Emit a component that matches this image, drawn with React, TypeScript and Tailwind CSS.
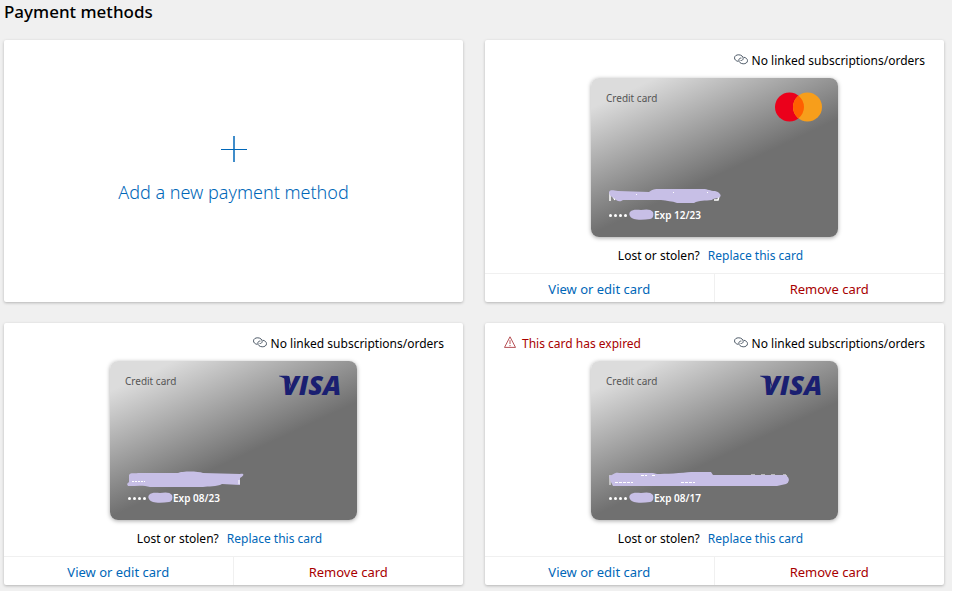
import { ReactNode } from "react";

type CardInfo = {
  id: string;
  brand: "mastercard" | "visa";
  expiry: string;
  expired?: boolean;
  mask: ReactNode;
};

function LinkIcon() {
  return (
    <svg width="14" height="11" viewBox="0 0 14 11" fill="none" stroke="#3c4a58" strokeWidth="0.9" aria-hidden="true" className="-mt-1 shrink-0">
      <path d="M4.300 7.400C2 7 .5 5.600 .5 3.900 .5 2 2.400 .7 4.800 .8 7.400 .9 9.300 2.600 9.200 4.500 9.100 5.900 8 6.700 6.600 6.500" />
      <path d="M9.700 3.200C12 3.600 13.500 5 13.500 6.700 13.500 8.600 11.600 9.900 9.200 9.800 6.600 9.700 4.700 8 4.800 6.100 4.900 4.700 6 3.900 7.400 4.100" />
    </svg>
  );
}

function WarningIcon() {
  return (
    <svg width="12" height="12" viewBox="0 0 12 12" fill="none" stroke="#a4262c" strokeOpacity="0.8" aria-hidden="true" className="-mt-1 shrink-0">
      <path d="M6 .8 11.500 11.400H.5Z" />
      <path d="M6 4.200V8M6 9V10.200" />
    </svg>
  );
}

function MastercardLogo() {
  return (
    <svg width="47" height="30" viewBox="0 0 47 30" role="img" aria-label="Mastercard">
      <circle cx="14.500" cy="15" r="14.500" fill="#eb001b" />
      <circle cx="32.500" cy="15" r="14.500" fill="#f79e1b" />
      <path d="M23.500 3.630a14.500 14.500 0 0 1 0 22.740a14.500 14.500 0 0 1 0-22.740Z" fill="#ff5f00" />
    </svg>
  );
}

function VisaLogo() {
  return (
    <svg width="62" height="30" viewBox="0 0 62 30" role="img" aria-label="Visa" fill="#1a1f71" className="overflow-visible">
      <path d="M0 .7H8C9.500 .7 10.300 1.400 10.600 2.700L12.500 13C10.500 7 6.500 3 0 1.300Z" />
      <text x="3" y="20" fontFamily="Open Sans, sans-serif" fontSize="27" fontWeight="800" fontStyle="italic">
        VISA
      </text>
    </svg>
  );
}

function Digits({ path }: { path: string }) {
  return (
    <svg width="26" height="12" viewBox="0 0 26 12" fill="#c7bfe6" aria-hidden="true">
      <path d={path} />
    </svg>
  );
}

const digitsPath = "M2 3C5 0 9 1 13 1C18 0 23 0 25 3C26 6 25 10 22 10C16 11 9 11 6 10C3 9 0 6 2 3Z";

const cards: CardInfo[] = [
  {
    id: "mc-1223",
    brand: "mastercard",
    expiry: "12/23",
    mask: (
      <>
        <path d="M1 4V13M2 5L6 12M105 12H109L110 8" stroke="#fff" strokeWidth="1.500" fill="none" />
        <path d="M0 4C2 1 5 3 9 3L40 4C44 0 50 1 56 1H94C99 1 101 3 106 3C110 4 113 7 111 9C108 11 104 10 103 12C96 13 90 12 85 15H68C63 13 58 13 52 12H14C10 15 7 12 5 10C2 9 0 7 0 4Z" />
        <path d="M27 6h1v1h-1ZM64 4h1v1h-1ZM98 4h1v1h-1Z" fill="#fff" />
      </>
    ),
  },
  {
    id: "visa-0823",
    brand: "visa",
    expiry: "08/23",
    mask: (
      <>
        <path d="M1 4C3 1 6 3 10 2H50C54 0 70 0 75 2L112 3C117 2 116 5 112 7V14L94 13C89 16 80 15 75 16H22C16 14 8 15 0 15L-1 13L1 11Z" />
        <path d="M4 10.500H17" stroke="#fff" strokeDasharray="2 1" />
        <path d="M111 9v4" stroke="#fff" />
      </>
    ),
  },
  {
    id: "visa-0817",
    brand: "visa",
    expiry: "08/17",
    expired: true,
    mask: (
      <>
        <path d="M1 4V14M142 4H146M152 4H156M162 4H166M174 4H177L178 12" stroke="#fff" fill="none" />
        <path d="M0 5C5 4 5 1 10 2H44L48 3C55 3 74 2 82 1H102L104 4H176C181 6 181 11 177 13L168 15H4L1 9Z" />
        <path d="M32 4.500h6M43 4.500h3M6 11.500h18M72 11.500h14" stroke="#fff" strokeDasharray="3 1" />
      </>
    ),
  },
];

function CardFace({ card }: { card: CardInfo }) {
  return (
    <div className="flex h-[159px] w-[247px] flex-col justify-between rounded-lg bg-[linear-gradient(155deg,#dcdcdc_11%,#707070_57%)] pt-3.5 pr-4 pb-4 pl-[15px] shadow-[0_1px_4px_rgba(0,0,0,0.35)]">
      <div className="flex items-start justify-between">
        <span className="text-[10px] leading-3 text-[#555]">Credit card</span>
        {card.brand === "mastercard" ? <MastercardLogo /> : <VisaLogo />}
      </div>
      <div className="flex flex-col gap-1 pl-[3px]">
        <svg width="182" height="17" viewBox="0 0 182 17" fill="#c7bfe6" aria-hidden="true" className="overflow-visible">
          {card.mask}
        </svg>
        <div className="flex h-3 items-center text-[10px] leading-3 font-semibold text-white">
          <span className="flex gap-0.5 pr-px">
            {[0, 1, 2, 3].map((dot) => (
              <i key={dot} className="size-[3px] rounded-full bg-white" />
            ))}
          </span>
          <Digits path={digitsPath} />
          <span>Exp {card.expiry}</span>
        </div>
      </div>
    </div>
  );
}

function PaymentCard({ card }: { card: CardInfo }) {
  return (
    <article className="flex flex-col rounded-xs bg-white shadow-[0_1px_3px_rgba(0,0,0,0.25)]">
      <div className="flex h-[38px] items-center px-[19px] pt-1 text-[12px] leading-4">
        {card.expired && (
          <span className="flex items-center gap-1.5 text-[#a80000]">
            <WarningIcon />
            This card has expired
          </span>
        )}
        <span className="ml-auto flex items-center gap-1 text-black">
          <LinkIcon />
          No linked subscriptions/orders
        </span>
      </div>
      <div className="flex justify-center">
        <CardFace card={card} />
      </div>
      <p className="flex h-9 items-center justify-center gap-2 pt-0.5 text-[12px] text-black">
        Lost or stolen?
        <a href="#replace" className="mr-2 text-[#0067b8]">
          Replace this card
        </a>
      </p>
      <div className="grid grid-cols-2 border-t border-[#f0f0f0] text-[13px]">
        <button type="button" className="h-7 border-r border-[#f0f0f0] pt-1 text-[#0067b8]">
          View or edit card
        </button>
        <button type="button" className="h-7 pt-1 text-[#a80000]">
          Remove card
        </button>
      </div>
    </article>
  );
}

export default function App() {
  return (
    <div className="bg-white pr-0.5 font-['Noto_Sans',sans-serif]">
      <main className="bg-[#f0f0f0] pr-2 pb-1.5 pl-1">
        <h1 className="pb-4 text-[17px] leading-6 font-medium text-black">Payment methods</h1>
        <div className="grid grid-cols-2 gap-x-[22px] gap-y-[21px]">
          <button
            type="button"
            className="flex flex-col items-center justify-center gap-[18px] rounded-xs bg-white pb-0.5 text-[18px] leading-6 font-light text-[#0067b8] shadow-[0_1px_3px_rgba(0,0,0,0.25)]"
          >
            <svg width="26" height="26" viewBox="0 0 26 26" stroke="#0067b8" aria-hidden="true">
              <path d="M13 0V26" strokeWidth="1.500" />
              <path d="M0 13.500H26" />
            </svg>
            Add a new payment method
          </button>
          {cards.map((card) => (
            <PaymentCard key={card.id} card={card} />
          ))}
        </div>
      </main>
    </div>
  );
}
